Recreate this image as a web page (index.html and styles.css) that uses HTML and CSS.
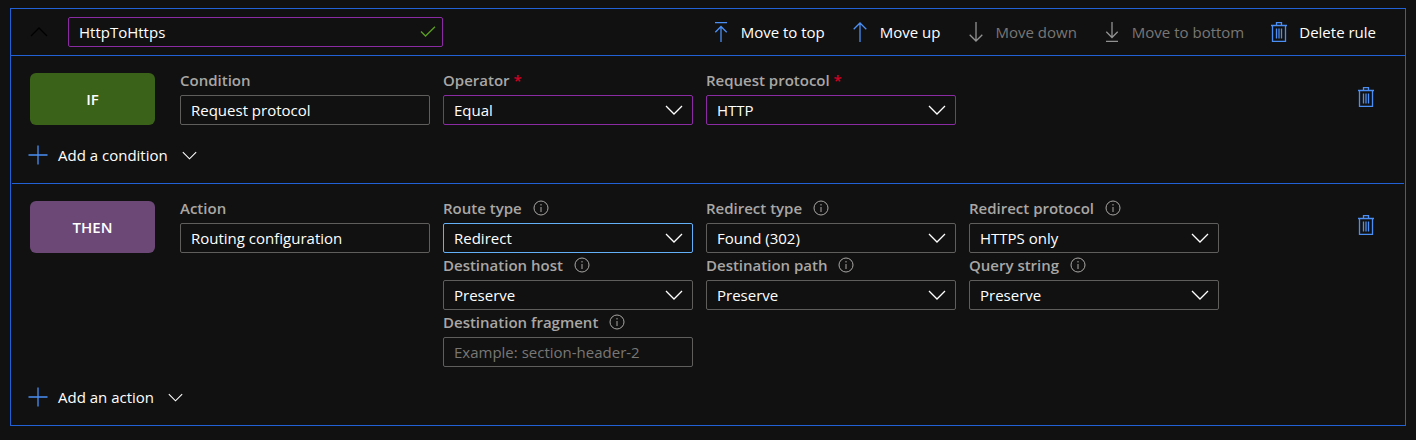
FILE: index.html
```html
<!DOCTYPE html>
<html lang="en">
<head>
<meta charset="utf-8">
<title>Rule HttpToHttps</title>
<link rel="stylesheet" href="styles.css">
</head>
<body>
<svg class="sprite" aria-hidden="true">
  <symbol id="trash" viewBox="0 0 20 20"><path d="M2 3.500h16M7.500 3V.7h5V3M3.500 4v15.400h13V4M7.500 6.500v10M10 6.500v10M12.500 6.500v10"/></symbol>
  <symbol id="up" viewBox="0 0 20 20"><path d="M10 20V1M3.700 7.300L10 1l6.300 6.300"/></symbol>
  <symbol id="down" viewBox="0 0 20 20"><path d="M10 0v19M3.700 12.700L10 19l6.300-6.300"/></symbol>
  <symbol id="top" viewBox="0 0 20 20"><path d="M4 .5h12M10 20V4.500M4.300 10.200L10 4.500l5.700 5.700"/></symbol>
  <symbol id="bottom" viewBox="0 0 20 20"><path d="M4 19.500h12M10 0v15.500M4.300 9.800L10 15.500l5.700-5.700"/></symbol>
  <symbol id="plus" viewBox="0 0 20 20"><path d="M10 .5v19M.5 10h19"/></symbol>
  <symbol id="chevron" viewBox="0 0 18 10"><path d="M1 1l8 8 8-8"/></symbol>
  <symbol id="info" viewBox="0 0 16 16"><circle cx="8" cy="8" r="7"/><path d="M8 7v5M8 4v1.500"/></symbol>
  <symbol id="check" viewBox="0 0 16 12"><path d="M1 5.500L5.500 10 15 .8"/></symbol>
</svg>

<main class="rule">
  <header class="rule-header">
    <button class="icon-button collapse" type="button" aria-label="Collapse rule"><svg class="chevron chevron-up"><use href="#chevron"/></svg></button>
    <div class="control rule-name">
      <input class="box changed" type="text" value="HttpToHttps" aria-label="Rule name">
      <svg class="check"><use href="#check"/></svg>
    </div>
    <div class="toolbar">
      <button class="command" type="button"><svg class="icon"><use href="#top"/></svg>Move to top</button>
      <button class="command" type="button"><svg class="icon"><use href="#up"/></svg>Move up</button>
      <button class="command" type="button" disabled><svg class="icon"><use href="#down"/></svg>Move down</button>
      <button class="command" type="button" disabled><svg class="icon"><use href="#bottom"/></svg>Move to bottom</button>
      <button class="command" type="button"><svg class="icon"><use href="#trash"/></svg>Delete rule</button>
    </div>
  </header>

  <section class="block">
    <div class="block-row">
      <div class="badge badge-if">IF</div>
      <div class="fields">
        <div class="field field-lead">
          <div class="label"><label for="condition">Condition</label></div>
          <div class="control"><input class="box" id="condition" type="text" value="Request protocol" readonly></div>
        </div>
        <div class="field">
          <div class="label"><label for="operator">Operator <span class="required">*</span></label></div>
          <div class="control"><select class="box changed" id="operator"><option>Equal</option></select><svg class="chevron"><use href="#chevron"/></svg></div>
        </div>
        <div class="field">
          <div class="label"><label for="protocol">Request protocol <span class="required">*</span></label></div>
          <div class="control"><select class="box changed" id="protocol"><option>HTTP</option></select><svg class="chevron"><use href="#chevron"/></svg></div>
        </div>
      </div>
      <button class="icon-button remove" type="button" aria-label="Delete condition"><svg class="icon"><use href="#trash"/></svg></button>
    </div>
    <button class="command add" type="button"><svg class="icon"><use href="#plus"/></svg>Add a condition<svg class="chevron chevron-small"><use href="#chevron"/></svg></button>
  </section>

  <section class="block">
    <div class="block-row">
      <div class="badge badge-then">THEN</div>
      <div class="fields">
        <div class="field field-lead">
          <div class="label"><label for="action">Action</label></div>
          <div class="control"><input class="box" id="action" type="text" value="Routing configuration" readonly></div>
        </div>
        <div class="field">
          <div class="label"><label for="route">Route type</label><svg class="info"><use href="#info"/></svg></div>
          <div class="control"><select class="box active" id="route"><option>Redirect</option></select><svg class="chevron"><use href="#chevron"/></svg></div>
        </div>
        <div class="field">
          <div class="label"><label for="redirect">Redirect type</label><svg class="info"><use href="#info"/></svg></div>
          <div class="control"><select class="box" id="redirect"><option>Found (302)</option></select><svg class="chevron"><use href="#chevron"/></svg></div>
        </div>
        <div class="field">
          <div class="label"><label for="redirect-protocol">Redirect protocol</label><svg class="info"><use href="#info"/></svg></div>
          <div class="control"><select class="box" id="redirect-protocol"><option>HTTPS only</option></select><svg class="chevron"><use href="#chevron"/></svg></div>
        </div>
        <div class="field">
          <div class="label"><label for="host">Destination host</label><svg class="info"><use href="#info"/></svg></div>
          <div class="control"><select class="box" id="host"><option>Preserve</option></select><svg class="chevron"><use href="#chevron"/></svg></div>
        </div>
        <div class="field">
          <div class="label"><label for="path">Destination path</label><svg class="info"><use href="#info"/></svg></div>
          <div class="control"><select class="box" id="path"><option>Preserve</option></select><svg class="chevron"><use href="#chevron"/></svg></div>
        </div>
        <div class="field">
          <div class="label"><label for="query">Query string</label><svg class="info"><use href="#info"/></svg></div>
          <div class="control"><select class="box" id="query"><option>Preserve</option></select><svg class="chevron"><use href="#chevron"/></svg></div>
        </div>
        <div class="field">
          <div class="label"><label for="fragment">Destination fragment</label><svg class="info"><use href="#info"/></svg></div>
          <div class="control"><input class="box" id="fragment" type="text" placeholder="Example: section-header-2"></div>
        </div>
      </div>
      <button class="icon-button remove" type="button" aria-label="Delete action"><svg class="icon"><use href="#trash"/></svg></button>
    </div>
    <button class="command add" type="button"><svg class="icon"><use href="#plus"/></svg>Add an action<svg class="chevron chevron-small"><use href="#chevron"/></svg></button>
  </section>
</main>
</body>
</html>
```
FILE: styles.css
```css
* {
  box-sizing: border-box;
}

body {
  margin: 0;
  padding: 8px 10px;
  background: #111111;
  color: #ffffff;
  font-family: "Open Sans", "Noto Sans", sans-serif;
  font-size: 15px;
  line-height: 24px;
}

button,
input,
select {
  margin: 0;
  color: inherit;
  font: inherit;
}

button {
  padding: 0;
  border: 0;
  background: none;
}

svg {
  flex: none;
  fill: none;
  stroke: currentColor;
}

.sprite {
  display: none;
}

.rule {
  border: 1px solid #2260d6;
}

.rule-header {
  display: flex;
  align-items: center;
  padding: 8px 29px 8px 19px;
  border-bottom: 1px solid #2260d6;
}

.icon-button {
  display: flex;
}

.collapse {
  width: 38px;
  color: #000000;
}

.rule-name {
  width: 375px;
}

.toolbar {
  display: flex;
  gap: 25px;
  margin-left: auto;
}

.command {
  display: flex;
  align-items: center;
  gap: 10px;
  white-space: nowrap;
}

.command:disabled {
  color: #797775;
}

.icon {
  width: 20px;
  height: 20px;
  color: #4b8ff5;
  stroke-width: 1.3;
}

.command:disabled .icon {
  color: #929292;
}

.chevron {
  width: 18px;
  height: 10px;
  stroke-width: 1.3;
}

.chevron-up {
  transform: rotate(180deg);
}

.chevron-small {
  width: 15px;
  height: 9px;
  margin-left: 4px;
}

.block {
  margin: 0 1px;
  padding: 12px 16px 13px;
}

.block + .block {
  border-top: 1px solid #2260d6;
}

.block-row {
  display: flex;
  align-items: flex-start;
  padding: 0 12px 0 2px;
}

.badge {
  flex: none;
  width: 125px;
  margin: 5px 25px 0 0;
  padding: 14px 0;
  border-radius: 6px;
  font-weight: 600;
  text-align: center;
}

.badge-if {
  background: #3b6219;
}

.badge-then {
  background: #6b4876;
}

.fields {
  display: grid;
  flex: 1;
  grid-template-columns: repeat(4, minmax(0, 250px));
  column-gap: 13px;
}

.field-lead {
  grid-row: span 3;
}

.label {
  display: flex;
  align-items: center;
  gap: 11px;
  padding-bottom: 3px;
  color: #a9a7a5;
  font-weight: 600;
  white-space: nowrap;
}

.required {
  color: #d00025;
}

.info {
  width: 16px;
  height: 16px;
}

.control {
  position: relative;
}

.box {
  display: block;
  width: 100%;
  height: 30px;
  padding: 0 10px;
  border: 1px solid #605e5c;
  border-radius: 2px;
  outline: 0;
  background: transparent;
  appearance: none;
}

.box::placeholder {
  color: #797775;
  opacity: 1;
}

.box.changed {
  border-color: #8a2ba3;
}

.box.active {
  border-color: #64b0f8;
}

.control .chevron {
  position: absolute;
  top: 10px;
  right: 10px;
  pointer-events: none;
}

.check {
  position: absolute;
  top: 9px;
  right: 7px;
  width: 16px;
  height: 12px;
  color: #5c9e22;
  stroke-width: 1.3;
}

.remove {
  margin-top: 19px;
}

.add {
  height: 30px;
  margin-top: 15px;
}
```
